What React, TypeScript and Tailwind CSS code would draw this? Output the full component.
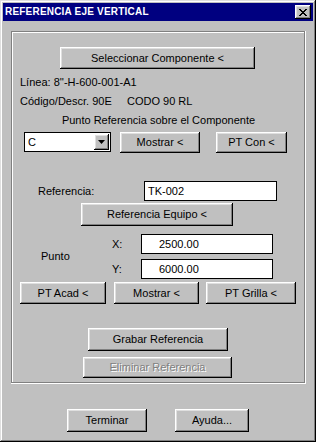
const raised =
  "shadow-[inset_-1px_-1px_#000,inset_1px_1px_#fff,inset_-2px_-2px_#808080,inset_2px_2px_#dfdfdf]";

function Btn({
  label,
  w,
  h = 22,
  ml = 0,
  disabled = false,
}: {
  label: string;
  w: number;
  h?: number;
  ml?: number;
  disabled?: boolean;
}) {
  return (
    <div
      className={`flex shrink-0 items-center justify-center bg-[#c0c0c0] ${raised} ${
        disabled ? "text-[#808080] [text-shadow:1px_1px_#fff]" : "text-black"
      }`}
      style={{ width: w, height: h, marginLeft: ml }}
    >
      {label}
    </div>
  );
}

function TextBox({ value, w, ml = 0, pl = 2 }: { value: string; w: number; ml?: number; pl?: number }) {
  return (
    <div
      className="flex h-[20px] shrink-0 items-center border border-black bg-white text-black"
      style={{ width: w, marginLeft: ml, paddingLeft: pl }}
    >
      {value}
    </div>
  );
}

export default function App() {
  return (
    <div className="h-[442px] w-[316px] bg-[#c0c0c0] p-[3px] font-['Liberation_Sans',Arial,sans-serif] text-[11px] leading-none text-black shadow-[inset_-1px_-1px_#000,inset_1px_1px_#dfdfdf,inset_-2px_-2px_#808080,inset_2px_2px_#fff]">
      {/* Title bar */}
      <div className="flex h-[18px] items-center justify-between bg-[#000080] pl-[2px] pr-[2px]">
        <span className="text-[10px] font-bold tracking-[0.2px] text-white">REFERENCIA EJE VERTICAL</span>
        <div className={`flex h-[14px] w-[16px] items-center justify-center bg-[#c0c0c0] ${raised}`}>
          <svg width="8" height="7" viewBox="0 0 8 7">
            <path d="M0 0h2v1h1v1h2V1h1V0h2v1H7v1H6v1H5v1h1v1h1v1h1v1H6V6H5V5H3v1H2v1H0V6h1V5h1V4h1V3H2V2H1V1H0z" fill="#000" />
          </svg>
        </div>
      </div>

      {/* Group box */}
      <div className="ml-[8px] mt-[10px] flex h-[353px] w-[295px] flex-col shadow-[inset_-1px_-1px_#fff,inset_1px_1px_#808080,inset_-2px_-2px_#808080,inset_2px_2px_#fff]">
        <div className="mt-[16px] flex">
          <Btn label="Seleccionar Componente <" w={195} h={22} ml={49} />
        </div>
        <div className="ml-[9px] mt-[6px] flex h-[14px] items-center">Línea: 8''-H-600-001-A1</div>
        <div className="ml-[9px] mt-[5px] flex h-[14px] items-center whitespace-pre">
          Código/Descr. 90E{"     "}CODO 90 RL
        </div>
        <div className="mt-[5px] flex h-[14px] items-center justify-center">Punto Referencia sobre el Componente</div>

        {/* combo row */}
        <div className="mt-[5px] flex h-[21px] items-start">
          <div className="ml-[13px] flex h-[20px] w-[87px] items-center border border-black bg-white pl-[3px]">
            <span className="flex-1">C</span>
            <div className={`mr-[1px] flex h-[16px] w-[15px] items-center justify-center bg-[#c0c0c0] ${raised}`}>
              <svg width="7" height="4" viewBox="0 0 7 4">
                <path d="M0 0h7L3.5 4z" fill="#000" />
              </svg>
            </div>
          </div>
          <Btn label="Mostrar <" w={80} h={21} ml={9} />
          <Btn label="PT Con <" w={71} h={21} ml={16} />
        </div>

        {/* Referencia */}
        <div className="mt-[28px] flex h-[20px] items-center">
          <span className="ml-[27px] w-[106px]">Referencia:</span>
          <TextBox value="TK-002" w={133} pl={3} />
        </div>
        <div className="mt-[2px] flex">
          <Btn label="Referencia Equipo <" w={152} h={23} ml={70} />
        </div>

        {/* Punto X / Y */}
        <div className="mt-[8px] flex">
          <div className="flex w-[101px] items-center pl-[30px]">Punto</div>
          <div className="flex flex-col gap-[5px]">
            <div className="flex h-[20px] items-center">
              <span className="w-[29px]">X:</span>
              <TextBox value="2500.00" w={132} pl={17} />
            </div>
            <div className="flex h-[20px] items-center">
              <span className="w-[29px]">Y:</span>
              <TextBox value="6000.00" w={132} pl={17} />
            </div>
          </div>
        </div>
        <div className="mt-[3px] flex">
          <Btn label="PT Acad <" w={86} h={22} ml={9} />
          <Btn label="Mostrar <" w={85} h={22} ml={8} />
          <Btn label="PT Grilla <" w={90} h={22} ml={7} />
        </div>

        <div className="mt-[24px] flex">
          <Btn label="Grabar Referencia" w={140} h={23} ml={77} />
        </div>
        <div className="mt-[6px] flex">
          <Btn label="Eliminar Referencia" w={149} h={21} ml={72} disabled />
        </div>
      </div>

      {/* bottom buttons */}
      <div className="mt-[25px] flex">
        <Btn label="Terminar" w={80} h={23} ml={64} />
        <Btn label="Ayuda..." w={74} h={23} ml={28} />
      </div>
    </div>
  );
}
